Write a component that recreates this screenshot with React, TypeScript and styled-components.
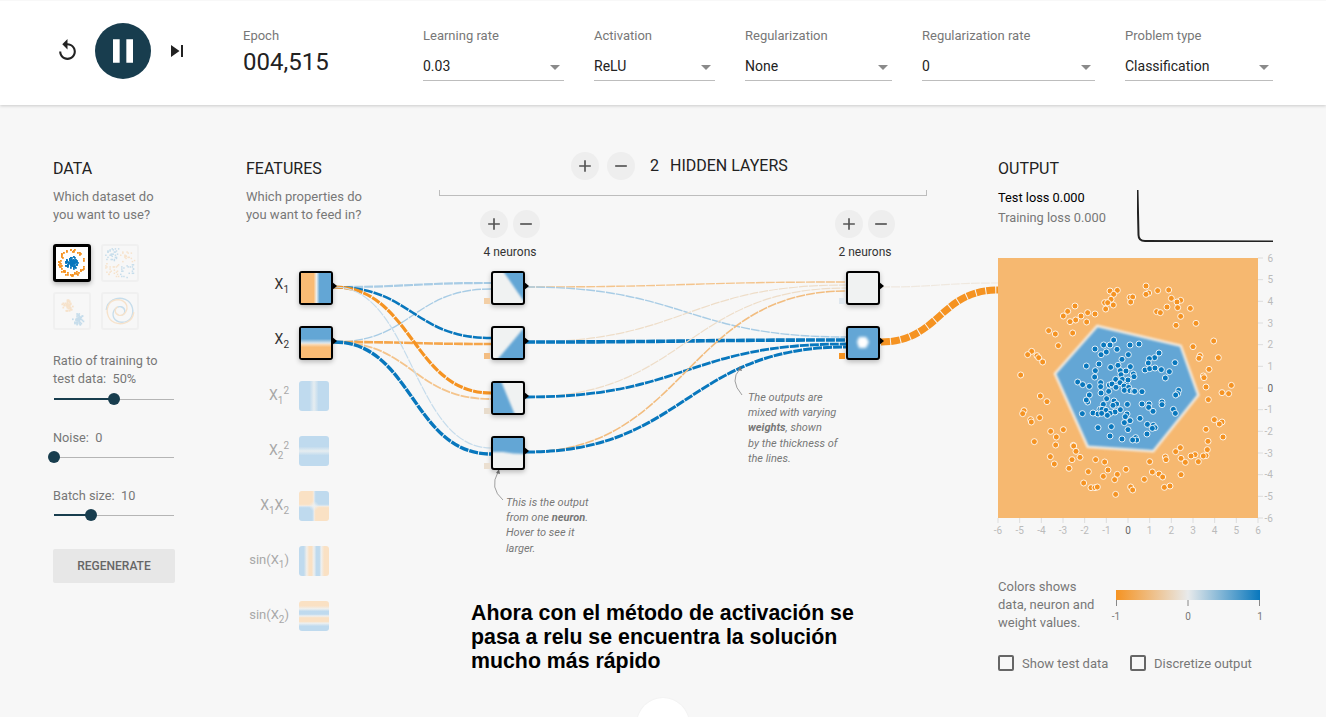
import React from "react";
import styled, { createGlobalStyle } from "styled-components";
import { MdAdd, MdPause, MdRemove, MdReplay, MdSkipNext } from "react-icons/md";

const Global = createGlobalStyle`
  html, body { margin: 0; padding: 0; background: #f7f7f7; }
  body { font-family: Roboto, "Liberation Sans", sans-serif; color: #222; }
`;

const Page = styled.div`
  position: relative;
  height: 717px;
  overflow: hidden;
  background: #f7f7f7;
`;

/* ---------- header ---------- */
const Header = styled.header`
  display: flex;
  height: 105px;
  box-sizing: border-box;
  background: #fff;
  border-top: 1px solid #f8f8f8;
  box-shadow: 0 1px 3px rgba(0, 0, 0, 0.18);
  padding-left: 55px;
`;
const Transport = styled.div`
  display: flex;
  align-items: center;
  width: 188px;
  height: 99px;
`;
const IconButton = styled.span`
  display: flex;
  color: #222;
`;
const PlayButton = styled.span`
  display: flex;
  align-items: center;
  justify-content: center;
  width: 56px;
  height: 56px;
  margin: 0 14px 0 15px;
  border-radius: 50%;
  background: #183d4e;
  color: #fff;
`;
const Field = styled.div<{ $w: number }>`
  width: ${(p) => p.$w}px;
  padding-top: 26px;
`;
const FieldLabel = styled.div`
  font-size: 13px;
  line-height: 16px;
  color: #777;
  padding-top: 1px;
`;
const EpochValue = styled.div`
  font-size: 24px;
  line-height: 28px;
  margin-top: 4px;
  color: #222;
`;
const SelectBox = styled.div`
  position: relative;
  height: 26px;
  margin-top: 10px;
  font-size: 14px;
  line-height: 24px;
  color: #222;
  border-bottom: 1px solid #bdbdbd;
  &::after {
    content: "";
    position: absolute;
    right: 4px;
    top: 11px;
    border-left: 5px solid transparent;
    border-right: 5px solid transparent;
    border-top: 5px solid #8a8a8a;
  }
`;
const Fields = styled.div`
  display: flex;
  gap: 30px;
`;

/* ---------- main ---------- */
const Main = styled.main`
  display: flex;
  padding-left: 53px;
`;
const Column = styled.section<{ $w: number }>`
  flex: 0 0 ${(p) => p.$w}px;
  padding-top: 54px;
`;
const Heading = styled.h4`
  margin: 0;
  font-size: 16px;
  line-height: 20px;
  font-weight: 400;
  color: #222;
  text-transform: uppercase;
`;
const Blurb = styled.p`
  margin: 9px 0 0;
  font-size: 13px;
  line-height: 18px;
  color: #777;
`;
const DatasetGrid = styled.div`
  display: grid;
  grid-template-columns: 38px 38px;
  grid-auto-rows: 38px;
  gap: 10px;
  margin-top: 20px;
`;
const Dataset = styled.div<{ $active?: boolean }>`
  box-sizing: border-box;
  border: ${(p) => (p.$active ? "3px solid #000" : "2px solid #f0f0f0")};
  border-radius: 3px;
  background: ${(p) => (p.$active ? "#fff" : "#f7f7f7")};
  box-shadow: ${(p) => (p.$active ? "0 2px 5px rgba(0,0,0,.3)" : "none")};
  display: flex;
  svg { width: 100%; height: 100%; opacity: ${(p) => (p.$active ? 1 : 0.2)}; }
`;
const SliderBlock = styled.div<{ $first?: boolean }>`
  margin-top: ${(p) => (p.$first ? 22 : 23)}px;
  width: 122px;
`;
const SliderLabel = styled.div<{ $first?: boolean }>`
  font-size: 12.75px;
  line-height: 18px;
  color: #777;
  padding-bottom: ${(p) => (p.$first ? 1 : 0)}px;
`;
const Track = styled.div`
  position: relative;
  width: 120px;
  height: 14px;
  margin: 3px 0 0 1px;
  &::before {
    content: "";
    position: absolute;
    left: 0;
    right: 0;
    top: 7px;
    height: 1px;
    background: #b5b5b5;
  }
`;
const TrackFill = styled.div<{ $pos: number }>`
  position: absolute;
  left: 0;
  top: 6px;
  height: 2px;
  width: ${(p) => p.$pos}px;
  background: #183d4e;
`;
const Thumb = styled.div<{ $pos: number }>`
  position: absolute;
  left: ${(p) => p.$pos - 6}px;
  top: 1px;
  width: 12px;
  height: 12px;
  border-radius: 50%;
  background: #183d4e;
`;
const Regenerate = styled.div`
  width: 122px;
  height: 34px;
  margin-top: 27px;
  background: #e7e7e7;
  border-radius: 2px;
  color: #666;
  font-size: 12px;
  font-weight: 500;
  line-height: 34px;
  text-align: center;
`;

/* ---------- network ---------- */
const Network = styled.section`
  position: relative;
  flex: 0 0 752px;
  display: flex;
`;
const Links = styled.svg`
  position: absolute;
  left: 0;
  top: 0;
  overflow: visible;
  pointer-events: none;
`;
const FeatureList = styled.div`
  display: flex;
  flex-direction: column;
  gap: 21px;
  margin-top: 47px;
  position: relative;
`;
const FeatureRow = styled.div`
  display: flex;
  gap: 10px;
  height: 34px;
`;
const FeatureLabel = styled.div<{ $on?: boolean; $small?: boolean }>`
  width: 43px;
  height: 30px;
  line-height: ${(p) => (p.$on ? 26 : 28)}px;
  text-align: right;
  white-space: nowrap;
  font-size: ${(p) => (p.$small ? 13 : 14)}px;
  color: ${(p) => (p.$on ? "#333" : "#a8a8a8")};
  sub, sup { font-size: 10px; line-height: 0; }
`;
const FeatureFill = styled.div<{ $bg: string; $on?: boolean }>`
  width: 30px;
  height: 30px;
  border-radius: ${(p) => (p.$on ? 0 : 3)}px;
  background: ${(p) => p.$bg};
`;
const NodeBox = styled.div<{ $fill?: string }>`
  position: relative;
  width: 30px;
  height: 30px;
  border: 2px solid #000;
  border-radius: 3px;
  background: ${(p) => p.$fill || "#f0f2f2"};
  box-shadow: 0 2px 5px rgba(0, 0, 0, 0.25);
  svg { display: block; }
  &::after {
    content: "";
    position: absolute;
    left: 30px;
    top: 8px;
    border-left: 6px solid #000;
    border-top: 5px solid transparent;
    border-bottom: 5px solid transparent;
  }
`;
const Bias = styled.span<{ $c: string }>`
  position: absolute;
  left: -9px;
  bottom: -1px;
  width: 6px;
  height: 6px;
  background: ${(p) => p.$c};
`;
const Blob = styled.polygon<{ $blur: number }>`
  filter: blur(${(p) => p.$blur}px);
`;
const Hidden = styled.div`
  position: relative;
  width: 488px;
  padding-top: 47px;
  flex: none;
`;
const HiddenHeader = styled.div`
  display: flex;
  align-items: center;
  height: 28px;
  padding-left: 132px;
  font-size: 16px;
  color: #222;
`;
const RoundButton = styled.span<{ $gap?: number }>`
  display: flex;
  align-items: center;
  justify-content: center;
  width: 28px;
  height: 28px;
  border-radius: 50%;
  background: #eee;
  color: #555;
  margin-right: ${(p) => p.$gap ?? 0}px;
`;
const LayerCount = styled.span`
  margin: 0 11px 2px 7px;
`;
const LayerCaption = styled.span`
  margin-bottom: 2px;
`;
const Bracket = styled.div`
  height: 6px;
  margin-top: 10px;
  box-sizing: border-box;
  border: 1px solid #bdbdbd;
  border-top: 0;
`;
const Layers = styled.div`
  display: flex;
  gap: 295px;
  padding-left: 41px;
  margin-top: 14px;
`;
const Layer = styled.div`
  width: 60px;
`;
const LayerButtons = styled.div`
  display: flex;
  gap: 5px;
`;
const LayerTitle = styled.div`
  width: 60px;
  margin-top: 6px;
  font-size: 12px;
  line-height: 16px;
  color: #333;
  text-align: center;
`;
const NodeStack = styled.div`
  display: flex;
  flex-direction: column;
  gap: 21px;
  margin: 11px 0 0 11px;
  position: relative;
`;
const Note = styled.div<{ $x: number; $y: number }>`
  position: absolute;
  left: ${(p) => p.$x}px;
  top: ${(p) => p.$y}px;
  font-size: 11px;
  font-style: italic;
  line-height: 15.2px;
  color: #777;
  white-space: nowrap;
`;
const Statement = styled.div`
  margin: 131px 0 0 32px;
  font-family: "Liberation Sans", Arial, sans-serif;
  font-weight: 700;
  font-size: 21.33px;
  line-height: 24px;
  color: #000;
  width: 420px;
  position: relative;
`;

/* ---------- output ---------- */
const LossRow = styled.div`
  display: flex;
  margin-top: 9px;
  height: 54px;
`;
const LossText = styled.div`
  width: 139px;
  font-size: 12.8px;
  line-height: 20px;
  color: #777;
`;
const TestLoss = styled.div`
  color: #000;
`;
const Plot = styled.svg`
  display: block;
  margin-top: 16px;
  overflow: visible;
  font-family: Roboto, sans-serif;
  font-size: 10px;
`;
const BlueZone = styled.polygon`
  filter: blur(1.1px);
`;
const LegendRow = styled.div`
  display: flex;
  margin-top: 60px;
  height: 54px;
`;
const LegendText = styled.div`
  width: 118px;
  font-size: 13px;
  line-height: 18px;
  color: #777;
`;
const LegendSvg = styled.svg`
  margin-top: 12px;
  overflow: visible;
  font-family: Roboto, sans-serif;
  font-size: 10px;
`;
const Checks = styled.div`
  display: flex;
  margin-top: 23px;
`;
const Check = styled.div<{ $w: number }>`
  display: flex;
  align-items: center;
  gap: 8px;
  width: ${(p) => p.$w}px;
  height: 16px;
  font-size: 13px;
  color: #777;
  white-space: nowrap;
`;
const CheckBox = styled.span`
  box-sizing: border-box;
  flex: none;
  width: 16px;
  height: 16px;
  border: 2px solid #666;
  border-radius: 2px;
`;
const BottomFab = styled.div`
  position: absolute;
  left: 637px;
  top: 698px;
  width: 52px;
  height: 52px;
  border-radius: 50%;
  background: #fff;
  box-shadow: 0 0 2px rgba(0, 0, 0, 0.06);
`;

/* ---------- data ---------- */
const ORANGE_PTS: number[][] = [[468,108],[382,121],[360,123],[503,122],[536,120],[476,129],[468,133],[371,133],[544,145],[420,142],[428,141],[363,148],[422,156],[344,158],[353,158],[572,151],[561,156],[370,165],[347,177],[255,168],[563,173],[601,175],[531,171],[500,185],[511,188],[233,184],[293,188],[315,192],[273,198],[220,198],[572,199],[257,210],[240,215],[290,216],[618,220],[558,226],[176,242],[196,252],[248,249],[671,273],[205,287],[609,290],[125,304],[113,314],[141,317],[146,323],[158,336],[630,317],[627,325],[685,323],[657,358],[92,375],[640,378],[642,383],[648,411],[724,406],[696,428],[716,431],[655,449],[151,438],[171,455],[102,482],[98,491],[122,509],[124,516],[149,503],[673,509],[696,516],[688,522],[648,538],[699,561],[220,539],[182,544],[199,561],[133,575],[654,574],[197,585],[250,586],[251,588],[652,599],[571,593],[557,605],[258,604],[615,614],[603,618],[648,617],[640,618],[526,621],[528,629],[181,620],[270,622],[246,629],[317,629],[573,625],[586,637],[625,635],[344,636],[479,635],[193,642],[237,655],[354,660],[408,658],[295,665],[487,666],[507,672],[382,673],[340,679],[518,681],[573,674],[374,689],[463,688],[281,699],[422,711],[303,713],[315,713],[322,711],[523,712],[540,708],[428,720],[377,733]];
const BLUE_PTS: number[][] = [[371,270],[447,282],[341,285],[360,285],[420,285],[315,297],[381,298],[349,306],[333,314],[415,314],[507,309],[494,323],[478,326],[396,328],[475,339],[555,338],[327,342],[289,348],[362,352],[384,346],[421,350],[465,360],[479,356],[495,354],[514,359],[538,365],[316,362],[391,362],[408,363],[393,374],[430,372],[432,380],[526,384],[314,381],[377,388],[397,388],[263,396],[278,404],[298,409],[332,398],[358,405],[366,402],[390,398],[410,400],[414,390],[332,410],[378,412],[402,408],[416,412],[403,421],[420,422],[430,424],[434,424],[456,425],[333,429],[356,424],[298,435],[566,421],[563,431],[557,435],[293,456],[289,450],[350,446],[372,453],[380,462],[340,463],[369,466],[412,463],[456,462],[477,462],[476,472],[516,456],[516,464],[330,478],[336,478],[348,481],[391,479],[375,486],[360,490],[489,484],[550,478],[556,490],[277,491],[309,489],[324,492],[335,490],[352,496],[411,492],[406,500],[450,505],[420,512],[403,518],[472,523],[490,526],[495,533],[487,535],[324,533],[364,530],[414,539],[471,552],[360,558],[396,567],[437,563],[440,570],[428,570]];

const DB = "#0877bd";
const DO = "#f59322";
const LB = "#a8cce5";
const LO = "#f4c48c";
const VO = "#eeddc8";

type Link = { x1: number; y1: number; x2: number; y2: number; c: string; w: number };
const L = (x1: number, y1: number, x2: number, y2: number, c: string, w: number): Link => ({ x1, y1, x2, y2, c, w });
const LINKS: Link[] = [
  L(334, 287, 491, 283, LB, 2.2),
  L(334, 342, 491, 289, LB, 1.4),
  L(334, 287, 491, 338, DB, 2.6),
  L(334, 342, 491, 344, "#f5a54a", 2.6),
  L(334, 287, 491, 393, DO, 3.2),
  L(334, 342, 491, 399, LO, 1.8),
  L(334, 287, 491, 448, "#c6dcec", 1.2),
  L(334, 342, 491, 454, DB, 3.4),
  L(526, 287, 846, 282, LO, 1.4),
  L(526, 287, 846, 337, LB, 1.4),
  L(526, 342, 846, 285, VO, 1.2),
  L(526, 342, 846, 340, DB, 3.6),
  L(526, 397, 846, 288, VO, 1.2),
  L(526, 397, 846, 344, DB, 2.8),
  L(526, 452, 846, 291, "#f2bd80", 1.6),
  L(526, 452, 846, 347, DB, 3),
  L(881, 287, 998, 283, "#efe8df", 1.2),
  L(881, 342, 998, 290, DO, 7),
];
const linkPath = (l: Link) => {
  const m = (l.x1 + l.x2) / 2;
  return `M${l.x1} ${l.y1} C${m} ${l.y1} ${m} ${l.y2} ${l.x2} ${l.y2}`;
};

const rng = (seed: number) => {
  let s = seed;
  return () => {
    s = (s * 1664525 + 1013904223) % 4294967296;
    return s / 4294967296;
  };
};
type Dot = { x: number; y: number; c: string; s: number };
const circleDots = (() => {
  const r = rng(7);
  const out: Dot[] = [];
  for (let i = 0; i < 56; i++) {
    const a = r() * Math.PI * 2;
    const d = 10.5 + r() * 3;
    out.push({ x: 15 + Math.cos(a) * d, y: 15 + Math.sin(a) * d, c: DO, s: 1.8 });
  }
  for (let i = 0; i < 80; i++) {
    const a = r() * Math.PI * 2;
    const d = r() * 6.5;
    out.push({ x: 15 + Math.cos(a) * d, y: 15 + Math.sin(a) * d, c: DB, s: 1.8 });
  }
  return out;
})();
const xorDots = (() => {
  const r = rng(21);
  const out: Dot[] = [];
  for (let i = 0; i < 110; i++) {
    const x = 2 + r() * 27;
    const y = 2 + r() * 27;
    if (Math.abs(x - 15) < 1 || Math.abs(y - 15) < 1) continue;
    out.push({ x, y, c: (x < 15) === (y < 15) ? DB : DO, s: 1.4 });
  }
  return out;
})();
const gaussDots = (() => {
  const r = rng(33);
  const out: Dot[] = [];
  for (let i = 0; i < 110; i++) {
    const a = r() * Math.PI * 2;
    const d = r() * 5.5;
    const blue = i % 2 === 0;
    out.push({
      x: (blue ? 21 : 11) + Math.cos(a) * d,
      y: (blue ? 23 : 10) + Math.sin(a) * d,
      c: blue ? DB : DO,
      s: 1.6,
    });
  }
  return out;
})();

const Dots = ({ dots }: { dots: Dot[] }) => (
  <svg viewBox="0 0 32 32">
    {dots.map((d, i) => (
      <rect key={i} x={Math.round(d.x)} y={Math.round(d.y)} width={d.s} height={d.s} fill={d.c} />
    ))}
  </svg>
);
const Spiral = () => (
  <svg viewBox="0 0 32 32" fill="none" strokeWidth="1.3">
    <path d="M3 15C4 6 13 2 21 5C28 8 30 17 26 23C22 28 13 28 10 22C8 17 12 11 17 12C21 13 22 18 18 20" stroke={DB} />
    <path d="M29 17C28 26 19 30 11 27C4 24 2 15 6 9C10 4 19 4 22 10C24 15 20 21 15 20C11 19 10 14 14 12" stroke={DO} />
  </svg>
);

const Fill = ({ pts, c = "#63a6d5", blur = 0.9 }: { pts: string; c?: string; blur?: number }) => (
  <svg width="30" height="30" viewBox="0 0 30 30">
    <Blob $blur={blur} points={pts} fill={c} />
  </svg>
);

const B = "#bfdaee";
const O = "#fae1c4";
const W = "#e6edf0";
const FEATURES: { label: React.ReactNode; bg: string; on?: boolean; small?: boolean }[] = [
  { label: <>X<sub>1</sub></>, on: true, bg: "linear-gradient(90deg,#f9bb74 0 42%,#f3dcc0 48%,#e8eef0 52%,#63a6d5 62%)" },
  { label: <>X<sub>2</sub></>, on: true, bg: "linear-gradient(180deg,#63a6d5 0 36%,#dbe6ed 50%,#f8d9b5 55%,#f9bb74 64%)" },
  { label: <>X<sub>1</sub><sup>2</sup></>, bg: `linear-gradient(90deg,${B} 0 35%,${W} 50%,${B} 65%)` },
  { label: <>X<sub>2</sub><sup>2</sup></>, bg: `linear-gradient(180deg,${B} 0 35%,${W} 50%,${B} 65%)` },
  { label: <>X<sub>1</sub>X<sub>2</sub></>, bg: `radial-gradient(circle at 50% 50%,#eef0f0 0,rgba(238,240,240,0) 5px),linear-gradient(90deg,transparent 0 44%,rgba(240,240,240,.7) 50%,transparent 56%),linear-gradient(180deg,transparent 0 44%,rgba(240,240,240,.7) 50%,transparent 56%),conic-gradient(${B} 0 25%,${O} 0 50%,${B} 0 75%,${O} 0)` },
  { label: <>sin(X<sub>1</sub>)</>, small: true, bg: `linear-gradient(90deg,${B} 0 16%,#f3efe9 26%,${O} 34% 42%,#eef0f0 50%,${B} 58% 68%,#eef0f0 74%,${O} 84%)` },
  { label: <>sin(X<sub>2</sub>)</>, small: true, bg: `linear-gradient(180deg,${O} 0 16%,#eef0f0 26%,${B} 34% 44%,#eef0f0 50%,${O} 56% 68%,#eef0f0 74%,${B} 84%)` },
];

const Select = ({ label, value, w }: { label: string; value: string; w: number }) => (
  <Field $w={w}>
    <FieldLabel>{label}</FieldLabel>
    <SelectBox>{value}</SelectBox>
  </Field>
);

const Slider = ({ label, pos, first }: { label: React.ReactNode; pos: number; first?: boolean }) => (
  <SliderBlock $first={first}>
    <SliderLabel $first={first}>{label}</SliderLabel>
    <Track>
      <TrackFill $pos={pos} />
      <Thumb $pos={pos} />
    </Track>
  </SliderBlock>
);

const Buttons = () => (
  <LayerButtons>
    <RoundButton><MdAdd size={20} /></RoundButton>
    <RoundButton><MdRemove size={20} /></RoundButton>
  </LayerButtons>
);

const TICKS = [-6, -5, -4, -3, -2, -1, 0, 1, 2, 3, 4, 5, 6];

export default function App() {
  return (
    <Page>
      <Global />
      <Header>
        <Transport>
          <IconButton><MdReplay size={25} /></IconButton>
          <PlayButton><MdPause size={40} /></PlayButton>
          <IconButton><MdSkipNext size={24} /></IconButton>
        </Transport>
        <Field $w={180}>
          <FieldLabel>Epoch</FieldLabel>
          <EpochValue>004,515</EpochValue>
        </Field>
        <Fields>
          <Select label="Learning rate" value="0.03" w={141} />
          <Select label="Activation" value="ReLU" w={121} />
          <Select label="Regularization" value="None" w={147} />
          <Select label="Regularization rate" value="0" w={173} />
          <Select label="Problem type" value="Classification" w={148} />
        </Fields>
      </Header>

      <Main>
        <Column $w={193}>
          <Heading>Data</Heading>
          <Blurb>Which dataset do<br />you want to use?</Blurb>
          <DatasetGrid>
            <Dataset $active><Dots dots={circleDots} /></Dataset>
            <Dataset><Dots dots={xorDots} /></Dataset>
            <Dataset><Dots dots={gaussDots} /></Dataset>
            <Dataset><Spiral /></Dataset>
          </DatasetGrid>
          <Slider first label={<>Ratio of training to<br />test data:&nbsp; 50%</>} pos={60} />
          <Slider label="Noise:&nbsp; 0" pos={0} />
          <Slider label="Batch size:&nbsp; 10" pos={37} />
          <Regenerate>REGENERATE</Regenerate>
        </Column>

        <Network>
          <Links width="760" height="612" viewBox="246 105 760 612" fill="none">
            {LINKS.map((l, i) => (
              <path key={i} d={linkPath(l)} stroke={l.c} strokeWidth={l.w} strokeDasharray="9 1" />
            ))}
            <path d="M503 500Q489 488 498 472" stroke="#888" strokeWidth="0.8" />
            <path d="M499 469L496 473L500 474Z" fill="#777" />
            <path d="M742 395Q729 380 740 369" stroke="#888" strokeWidth="0.8" />
            <path d="M740 366L738 370L742 371Z" fill="#777" />
          </Links>
          <Column $w={193}>
            <Heading>Features</Heading>
            <Blurb>Which properties do<br />you want to feed in?</Blurb>
            <FeatureList>
              {FEATURES.map((f, i) =>
                <FeatureRow key={i}>
                  <FeatureLabel $on={f.on} $small={f.small}>{f.label}</FeatureLabel>
                  {f.on ? (
                    <NodeBox><FeatureFill $on $bg={f.bg} /></NodeBox>
                  ) : (
                    <FeatureFill $bg={f.bg} />
                  )}
                </FeatureRow>
              )}
            </FeatureList>
          </Column>
          <Hidden>
            <HiddenHeader>
              <RoundButton $gap={8}><MdAdd size={20} /></RoundButton>
              <RoundButton $gap={8}><MdRemove size={20} /></RoundButton>
              <LayerCount>2</LayerCount>
              <LayerCaption>HIDDEN LAYERS</LayerCaption>
            </HiddenHeader>
            <Bracket />
            <Layers>
              <Layer>
                <Buttons />
                <LayerTitle>4 neurons</LayerTitle>
                <NodeStack>
                  <NodeBox><Fill pts="10,-2 32,-2 32,29 30,27" /><Bias $c="#f3cfa6" /></NodeBox>
                  <NodeBox><Fill pts="32,-1 30,1 4,32 32,32" /><Bias $c="#f3bd82" /></NodeBox>
                  <NodeBox><Fill pts="-2,-2 8,-2 22,32 -2,32" /><Bias $c="#e8dccc" /></NodeBox>
                  <NodeBox><Fill pts="-2,-2 32,-2 32,16 20,15.5 10,14 -2,14" /><Bias $c="#ebdfd0" /></NodeBox>
                </NodeStack>
              </Layer>
              <Layer>
                <Buttons />
                <LayerTitle>2 neurons</LayerTitle>
                <NodeStack>
                  <NodeBox><Bias $c="#dfe7ee" /></NodeBox>
                  <NodeBox $fill="#63a6d5"><Fill blur={1.6} pts="11,9 18,9 21,14 18,20 11,20 9,14" c="#fff" /><Bias $c="#f59322" /></NodeBox>
                </NodeStack>
              </Layer>
            </Layers>
            <Statement>
              Ahora con el método de activación se<br />
              pasa a relu se encuentra la solución<br />
              mucho más rápido
            </Statement>
          </Hidden>
          <Note $x={260} $y={390}>
            This is the output<br />from one <b>neuron</b>.<br />Hover to see it<br />larger.
          </Note>
          <Note $x={502} $y={285}>
            The outputs are<br />mixed with varying<br /><b>weights</b>, shown<br />by the thickness of<br />the lines.
          </Note>
        </Network>

        <Column $w={275}>
          <Heading>Output</Heading>
          <LossRow>
            <LossText>
              <TestLoss>Test loss 0.000</TestLoss>
              Training loss 0.000
            </LossText>
            <svg width="136" height="54" viewBox="0 0 136 54" fill="none">
              <path d="M0.5 2L1.5 47Q1.6 53 8 53L136 53.6" stroke="#222" strokeWidth="2" />
            </svg>
          </LossRow>
          <Plot width="260" height="260" viewBox="0 0 260 260">
            <rect width="260" height="260" fill="#f6b870" />
            <BlueZone
              points="99.3,68 182.7,87.7 200.3,137 155.3,193.3 89.7,188.7 57,115.7"
              fill="#63a6d5"
              stroke="#f3ece2"
              strokeWidth="2.5"
            />
            {ORANGE_PTS.map(([x, y], i) => (
              <circle key={i} cx={(x - 24) / 3} cy={(y - 24) / 3} r="3" fill={DO} stroke="#fff" strokeOpacity=".85" strokeWidth="1" />
            ))}
            {BLUE_PTS.map(([x, y], i) => (
              <circle key={i} cx={(x - 24) / 3} cy={(y - 24) / 3} r="3" fill={DB} stroke="#fff" strokeOpacity=".85" strokeWidth="1" />
            ))}
            {TICKS.map((t) => {
              const p = 130 + (t * 130) / 6;
              const c = t === 0 ? "#666" : "#bbb";
              return (
                <g key={t}>
                  <line x1="260" x2="265" y1={260 - p} y2={260 - p} stroke="#ddd" />
                  <text x="275" y={263.5 - p} textAnchor="end" fill={c}>{t}</text>
                  <line x1={p} x2={p} y1="260" y2="265" stroke="#ddd" />
                  <text x={p} y="276" textAnchor="middle" fill={c}>{t}</text>
                </g>
              );
            })}
          </Plot>
          <LegendRow>
            <LegendText>Colors shows<br />data, neuron and<br />weight values.</LegendText>
            <LegendSvg width="146" height="30" viewBox="0 0 146 30">
              <defs>
                <linearGradient id="legend">
                  <stop offset="0" stopColor={DO} />
                  <stop offset="0.5" stopColor="#e8eaeb" />
                  <stop offset="1" stopColor={DB} />
                </linearGradient>
              </defs>
              <rect width="144" height="10" fill="url(#legend)" />
              <path d="M0.5 10V16M72 10V16M143.5 10V16" stroke="#888" />
              <text x="0" y="30" textAnchor="middle" fill="#777">-1</text>
              <text x="72" y="30" textAnchor="middle" fill="#777">0</text>
              <text x="144" y="30" textAnchor="middle" fill="#777">1</text>
            </LegendSvg>
          </LegendRow>
          <Checks>
            <Check $w={132}><CheckBox />Show test data</Check>
            <Check $w={130}><CheckBox />Discretize output</Check>
          </Checks>
        </Column>
      </Main>
      <BottomFab />
    </Page>
  );
}
